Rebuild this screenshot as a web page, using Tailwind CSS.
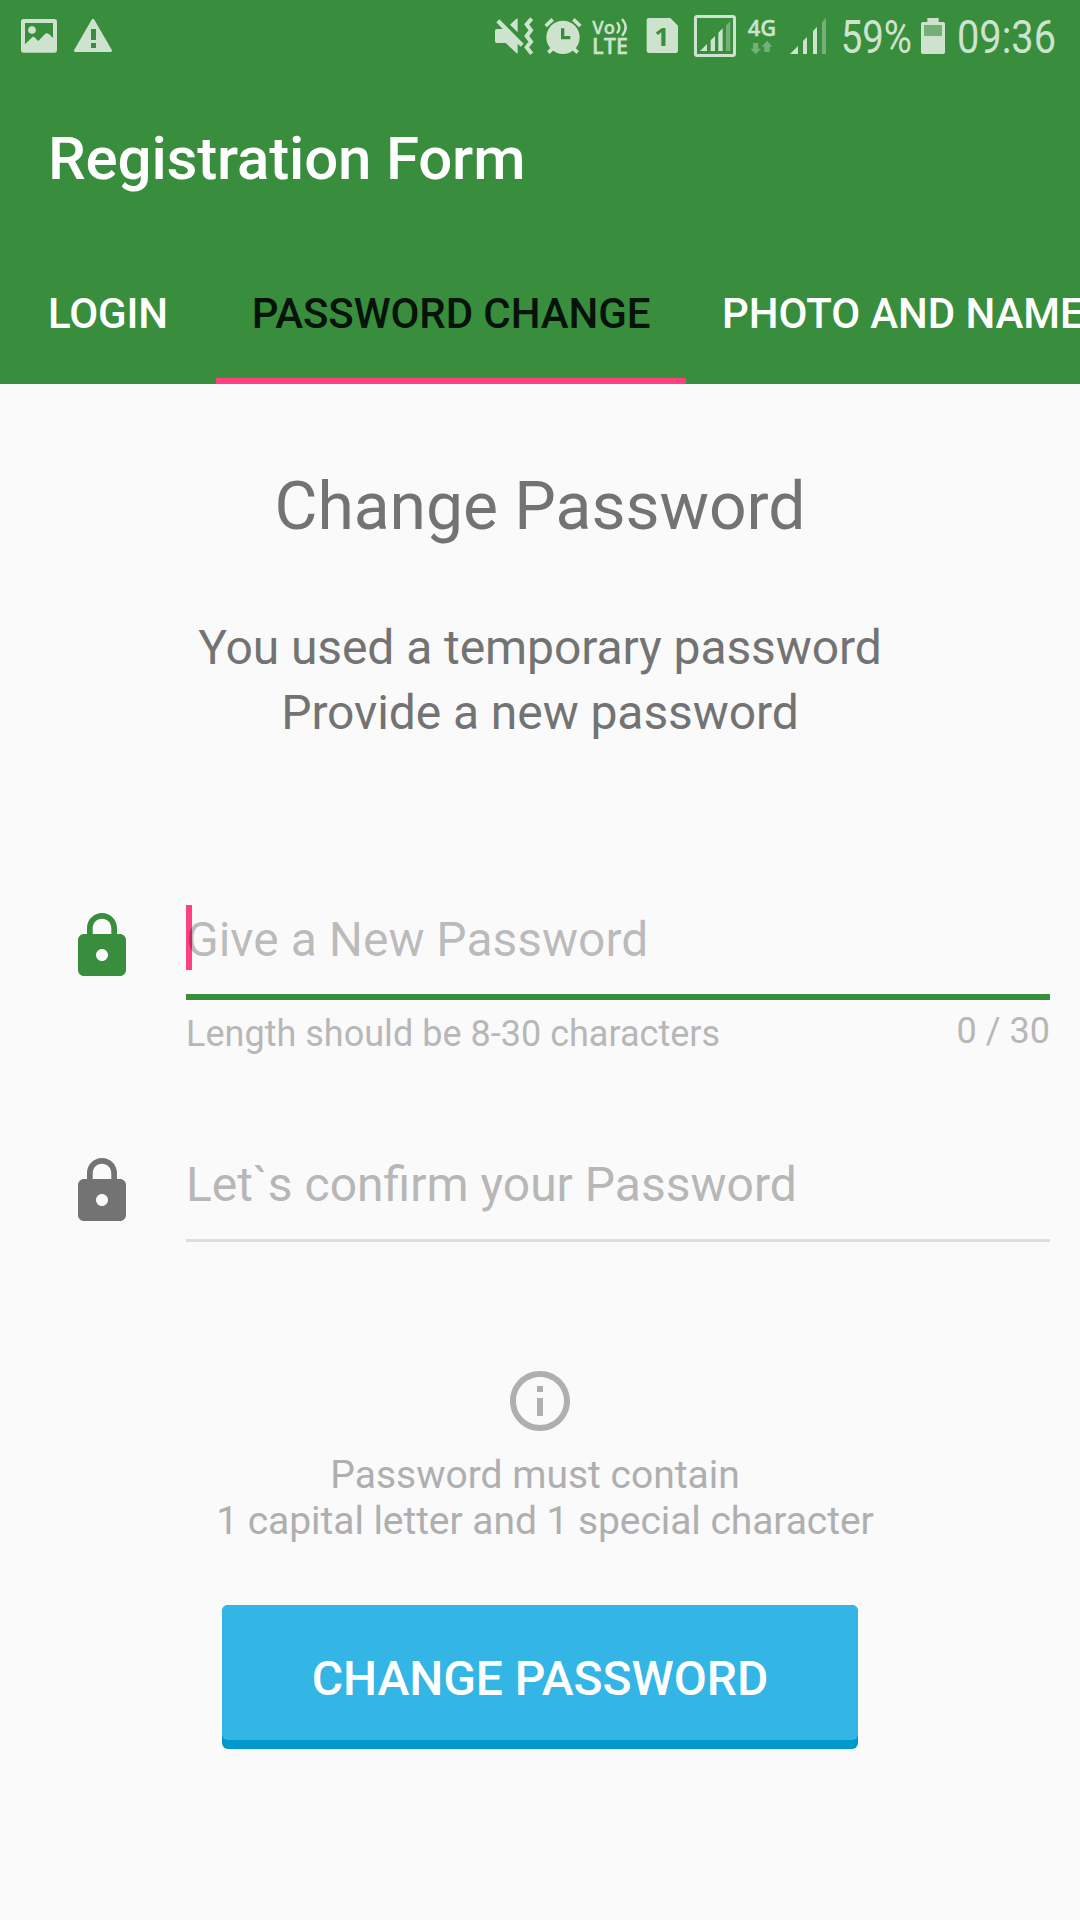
<!DOCTYPE html>
<html lang="en">
<head>
<meta charset="utf-8">
<title>Registration Form</title>
<script src="https://cdn.jsdelivr.net/npm/@tailwindcss/browser@4"></script>
</head>
<body class="flex h-[1920px] w-[1080px] flex-col overflow-hidden bg-[#fafafa] font-['Roboto',sans-serif]">
<header class="flex h-96 shrink-0 flex-col bg-[#388e3c] text-white">
  <!-- status bar -->
  <div class="flex h-[72px] justify-between">
    <svg class="h-[72px] w-[120px] text-[#cde3ce]" viewBox="0 0 360 216" fill="currentColor">
      <path fill-rule="evenodd" d="M71 57H163Q171 57 171 65V150Q171 158 163 158H71Q63 158 63 150V65Q63 57 71 57ZM75 69V133L95 113Q100 108 105 113L115 123L135 102Q141 97 147 102L159 114V69Z"/>
      <circle cx="96" cy="90" r="11.5"/>
      <path fill-rule="evenodd" d="M275 59Q279 54 283 59L336 151Q337 156 332 156H226Q221 156 222 151ZM273 87V120H288V87ZM273 129V144H288V129Z"/>
    </svg>
    <svg class="h-[72px] w-[600px] text-[#cde3ce]" viewBox="0 0 1800 216" fill="currentColor">
      <!-- muted, vibrate -->
      <path d="M50 87H68L49 67L58 58L131 131L122 140L113 131V160H110L77 129H50Q45 129 45 123V93Q45 87 50 87ZM90 74L109 56H113V97Z"/>
      <path d="M155 56L140 73L153 91L140 108L153 125L140 142L155 161" fill="none" stroke="currentColor" stroke-width="12"/>
      <!-- alarm -->
      <circle cx="249" cy="112" r="50"/>
      <path d="M197 78L218 58M301 78L280 58M205 158L218 145M293 158L280 145" fill="none" stroke="currentColor" stroke-width="11"/>
      <path d="M248 85V113H271" fill="none" stroke="#388e3c" stroke-width="10"/>
      <!-- VoLTE -->
      <text x="337" y="101" font-family="Open Sans" font-weight="600" font-size="56" textLength="68" lengthAdjust="spacingAndGlyphs" stroke="currentColor" stroke-width="1">Vo</text>
      <path d="M411 67Q425 83 411 100M426 57Q448 83 426 107" fill="none" stroke="currentColor" stroke-width="7"/>
      <text x="336" y="162" font-family="Open Sans" font-weight="600" font-size="62" textLength="108" lengthAdjust="spacingAndGlyphs" stroke="currentColor" stroke-width="1">LTE</text>
      <!-- SIM -->
      <path d="M507 54H571L594 77V152Q594 159 587 159H507Q500 159 500 152V61Q500 54 507 54Z"/>
      <text x="523" y="137" font-family="Open Sans" font-weight="700" font-size="77" textLength="46" lengthAdjust="spacingAndGlyphs" fill="#388e3c">1</text>
      <!-- boxed signal -->
      <rect x="646.500" y="49.500" width="117" height="117" rx="5" fill="none" stroke="currentColor" stroke-width="9"/>
      <path d="M660 153L681 132V153ZM692 153V121L705 108V153ZM715 153V98L728 85V153Z"/>
      <path d="M738 153V76L751 63V153Z" fill="#74b077"/>
      <text x="803" y="107" font-family="Open Sans" font-weight="600" font-size="65" textLength="86" lengthAdjust="spacingAndGlyphs" stroke="currentColor" stroke-width="1">4G</text>
      <path d="M819 129H835V146H843L827 163L811 146H819ZM853 156V140H845L861 122L877 140H869V156Z" fill="#74b077"/>
      <!-- signal -->
      <path d="M930 162L954 138V162ZM969 162V123L981 111V162ZM999 162V93L1011 81V162Z"/>
      <path d="M1026 162V66L1038 54V162Z" fill="#74b077"/>
      <text x="1082" y="160" font-family="Roboto" font-size="137" textLength="214" lengthAdjust="spacingAndGlyphs">59%</text>
      <!-- battery -->
      <path d="M1342 54H1376V66H1390Q1395 66 1395 71V157Q1395 162 1390 162H1328Q1323 162 1323 157V71Q1323 66 1328 66H1342Z"/>
      <path d="M1332 75H1386V108H1332Z" fill="#74b077"/>
      <text x="1431" y="160" font-family="Roboto" font-size="137" textLength="297" lengthAdjust="spacingAndGlyphs">09:36</text>
    </svg>
  </div>
  <h1 class="mt-[52px] pl-12 text-[60px]/[70px] font-medium tracking-[-0.17px]">Registration Form</h1>
  <nav class="mt-auto flex h-36 text-[42px]/[148px] font-medium tracking-[-0.1px] whitespace-nowrap">
    <a class="w-[216px] shrink-0 text-center">LOGIN</a>
    <a class="w-[470px] shrink-0 border-b-6 border-[#ff4081] text-center text-[#06130a]">PASSWORD CHANGE</a>
    <a class="shrink-0 px-9">PHOTO AND NAME</a>
  </nav>
</header>
<main class="flex flex-col text-[#737373]">
  <h2 class="mt-[84px] text-center text-[66px]/[78px] tracking-[-0.05px]">Change Password</h2>
  <p class="mt-[69px] text-center text-[48px]/[65px] tracking-[-0.08px]">You used a temporary password<br>Provide a new password</p>

  <form class="mt-[160px] flex flex-col pr-[30px] pl-[66px]">
    <div class="flex h-[245px]">
      <svg class="mt-[5px] mr-12 size-[72px] shrink-0 text-[#388e3c]" viewBox="0 0 24 24" fill="currentColor"><path d="M18 8h-1V6c0-2.760-2.240-5-5-5S7 3.240 7 6v2H6c-1.100 0-2 .9-2 2v10c0 1.100.9 2 2 2h12c1.100 0 2-.9 2-2V10c0-1.100-.9-2-2-2zm-6 9c-1.100 0-2-.9-2-2s.9-2 2-2 2 .9 2 2-.9 2-2 2zm3.100-9H8.900V6c0-1.710 1.390-3.100 3.100-3.100s3.100 1.390 3.100 3.100v2z"/></svg>
      <div class="flex grow flex-col">
        <div class="relative h-[95px] border-b-6 border-[#388e3c] text-[48px]/[69px]">
          <span class="absolute top-0 left-0 h-[65px] w-1.5 bg-[#ff4081]"></span>
          <span class="relative text-black/27">Give a New Password</span>
        </div>
        <div class="flex justify-between text-[36px]/[42px] text-[#b7b7b7]">
          <span class="mt-[13px] tracking-[0.02px]">Length should be 8-30 characters</span>
          <span class="mt-[10px]">0 / 30</span>
        </div>
      </div>
    </div>
    <div class="flex h-[92px]">
      <svg class="mt-[5px] mr-12 size-[72px] shrink-0" viewBox="0 0 24 24" fill="currentColor"><path d="M18 8h-1V6c0-2.760-2.240-5-5-5S7 3.240 7 6v2H6c-1.100 0-2 .9-2 2v10c0 1.100.9 2 2 2h12c1.100 0 2-.9 2-2V10c0-1.100-.9-2-2-2zm-6 9c-1.100 0-2-.9-2-2s.9-2 2-2 2 .9 2 2-.9 2-2 2zm3.100-9H8.900V6c0-1.710 1.390-3.100 3.100-3.100s3.100 1.390 3.100 3.100v2z"/></svg>
      <div class="grow border-b-3 border-[#dddddd] text-[48px]/[69px] text-[#b7b7b7]">Let`s confirm your Password</div>
    </div>
  </form>

  <section class="mt-[123px] flex flex-col items-center text-[39px]/[46px] text-[#afafaf]">
    <svg class="size-[72px]" viewBox="0 0 24 24" fill="currentColor"><path d="M11 17h2v-6h-2v6zm1-15C6.480 2 2 6.480 2 12s4.480 10 10 10 10-4.480 10-10S17.520 2 12 2zm0 18c-4.410 0-8-3.590-8-8s3.590-8 8-8 8 3.590 8 8-3.590 8-8 8zM11 9h2V7h-2v2z"/></svg>
    <p class="mt-[15px] pr-[10px]">Password must contain</p>
    <p class="pl-[10px] tracking-[-0.06px]">1 capital letter and 1 special character</p>
  </section>
  <button class="mt-[61px] h-36 w-[636px] self-center rounded-md bg-[#0099cc] pb-[9px] text-[48px]/[135px] font-medium text-white"><span class="block h-[135px] rounded-md bg-[#33b5e5] pt-[10px] leading-[127px] tracking-[-0.05px]">CHANGE PASSWORD</span></button>
</main>
</body>
</html>
